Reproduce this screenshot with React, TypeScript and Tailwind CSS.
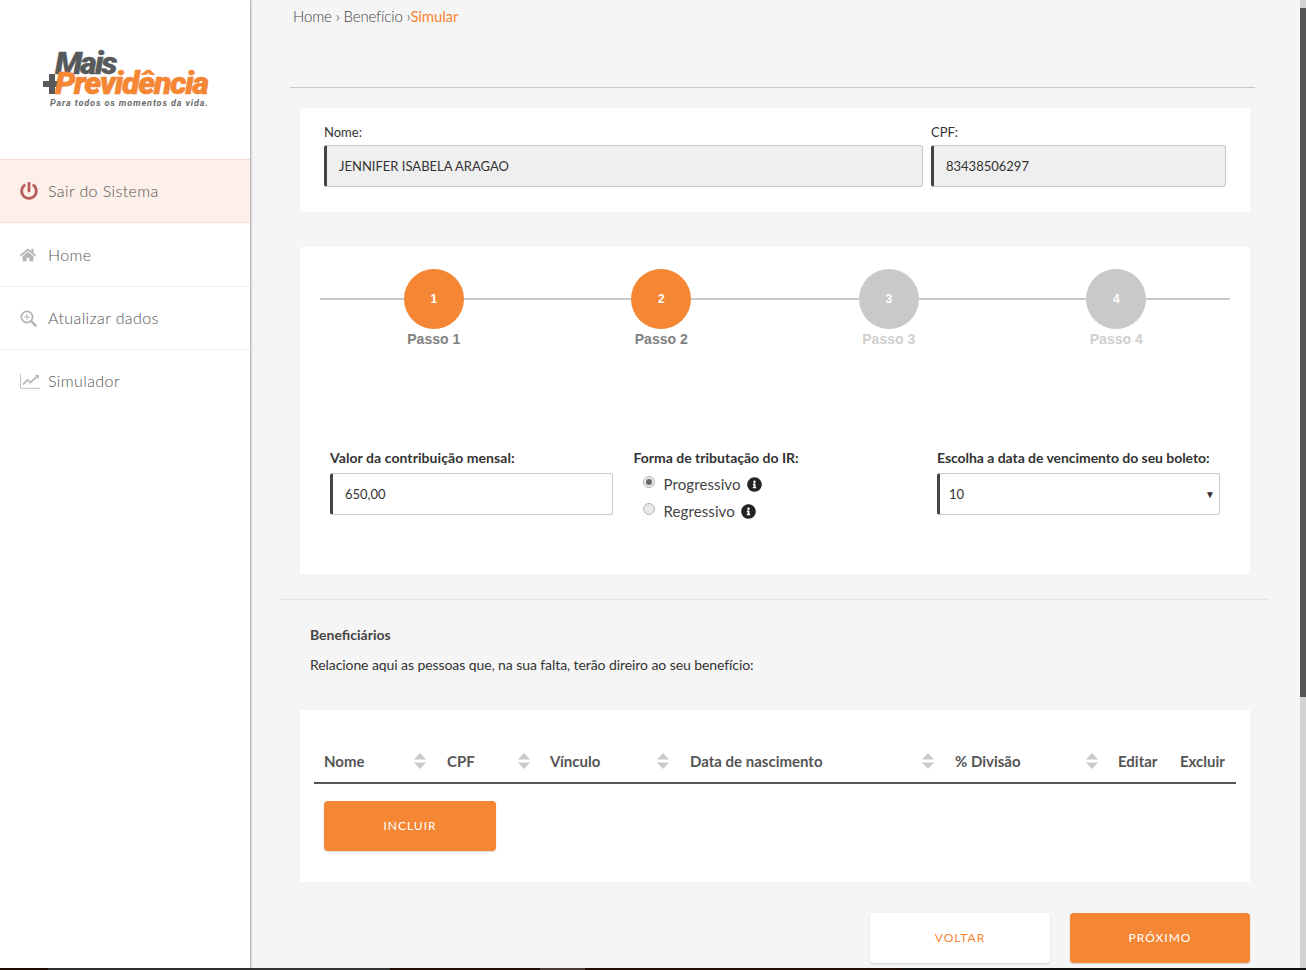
import React from "react";
import { FaHome, FaInfoCircle, FaPowerOff } from "react-icons/fa";

const lato = "font-['Lato','Noto_Sans',sans-serif]";

function SearchPlus() {
  return (
    <svg width="17" height="17" viewBox="0 0 17 17" fill="none" stroke="#b5b5b5">
      <circle cx="7" cy="7" r="5.6" strokeWidth="1.8" />
      <path d="M4.2 7h5.6M7 4.2v5.6" strokeWidth="1.2" />
      <path d="M11.2 11.2l4.4 4.4" strokeWidth="2.4" strokeLinecap="round" />
    </svg>
  );
}

function LineChart() {
  return (
    <svg width="20" height="16" viewBox="0 0 20 16" fill="none">
      <path d="M.5 1v14.3H20" stroke="#c4c4c4" strokeWidth="1" />
      <path d="M3 11.5l4.5-4.6 3 2.6L18 2.6" stroke="#b8b8b8" strokeWidth="1.8" />
      <path d="M14.8 2h4.2v4.2z" fill="#b8b8b8" />
    </svg>
  );
}

function SortIcon() {
  return (
    <svg width="12" height="16" viewBox="0 0 12 16" fill="#c9c9c9">
      <path d="M6 0l6 6.5H0z" />
      <path d="M0 9.5h12L6 16z" />
    </svg>
  );
}

function NavItem({ icon, label, active, divider, h }: { icon: React.ReactNode; label: string; active?: boolean; divider?: boolean; h: string }) {
  return (
    <div
      className={
        h + " flex items-center pl-[20px] text-[16px] font-light tracking-[0.4px] text-[#555] " +
        (active ? "bg-[#fdefe9] border-y border-[#f6ddd3] " : "") +
        (divider ? "border-b border-[#eeeeee] " : "")
      }
    >
      <span className="w-[28px] flex items-center">{icon}</span>
      <span>{label}</span>
    </div>
  );
}

function Step({ n, on }: { n: number; on: boolean }) {
  return (
    <div className="w-1/4 flex flex-col font-['Liberation_Sans',Arial,sans-serif] font-bold">
      <div className="flex items-center">
        <div className="flex-1 h-[2px] bg-[#c9c9c9]" />
        <div className={"w-[60px] h-[60px] rounded-full flex items-center justify-center text-white text-[12px] " + (on ? "bg-[#f58634]" : "bg-[#c9c9c9]")}>{n}</div>
        <div className="flex-1 h-[2px] bg-[#c9c9c9]" />
      </div>
      <div className={"text-center text-[14px] leading-[20px] " + (on ? "text-[#808080]" : "text-[#cfcfcf]")}>Passo {n}</div>
    </div>
  );
}

function Radio({ checked, label }: { checked?: boolean; label: string }) {
  return (
    <div className="flex items-center h-[27px] pl-[9px]">
      <span className="w-[12px] h-[12px] rounded-full border border-[#b5b5b5] bg-[#e9e9e9] flex items-center justify-center mb-[6px]">
        {checked && <span className="w-[6px] h-[6px] rounded-full bg-[#666]" />}
      </span>
      <span className="ml-[9px] text-[15px] tracking-[0.1px] text-[#444]">{label}</span>
      <FaInfoCircle className="ml-[6px] text-[15px] text-[#222]" />
    </div>
  );
}

function Th({ label, w, sort, pr }: { label: string; w: string; sort?: boolean; pr?: string }) {
  return (
    <div className={w + " flex items-center justify-between pl-[10px] " + (pr || "pr-[11px]")}>
      <span>{label}</span>
      {sort && <SortIcon />}
    </div>
  );
}

export default function App() {
  return (
    <div className={lato + " w-[1306px] h-[970px] overflow-hidden flex flex-col bg-[#f5f5f5] text-[#444]"}>
      <div className="flex h-[968px]">
        <aside className="w-[250px] shrink-0 bg-white shadow-[1px_0_2px_rgba(0,0,0,0.35)] z-10">
          <div className="h-[159px] pt-[48px] pl-[43px] relative">
            <svg width="18" height="20" viewBox="0 0 18 20" className="absolute left-[43px] top-[74px]">
              <path d="M6 0h6v7h6v6h-6v7H6v-7H0V7h6z" fill="#58595b" />
            </svg>
            <div className="pl-[12px] font-['Roboto',sans-serif] font-black italic text-[#58595b] text-[32px] leading-[30px] tracking-[-1.9px] [-webkit-text-stroke:0.4px_#58595b]">Mais</div>
            <div className="relative pl-[12px] -mt-[8px] font-['Roboto',sans-serif] font-black italic text-[#f58634] text-[32px] leading-[26px] tracking-[-1.2px] whitespace-nowrap [-webkit-text-stroke:0.6px_#f58634]">Previdência</div>
            <div className="pl-[7px] mt-[1px] font-['Roboto',sans-serif] font-bold italic text-[#6b6b6b] text-[9px] leading-[12px] tracking-[0.9px] whitespace-nowrap">Para todos os momentos da vida.</div>
          </div>
          <NavItem h="h-[64px]" active icon={<FaPowerOff className="text-[18px] text-[#b85c5c]" />} label="Sair do Sistema" />
          <NavItem h="h-[64px]" divider icon={<FaHome className="text-[16px] text-[#b5b5b5]" />} label="Home" />
          <NavItem h="h-[63px]" divider icon={<SearchPlus />} label="Atualizar dados" />
          <NavItem h="h-[62px]" icon={<LineChart />} label="Simulador" />
        </aside>

        <main className="flex-1 pl-[40px] pr-[45px]">
          <div className="h-[88px] pl-[3px] pt-[5px] text-[15px] leading-[22px] font-light tracking-[-0.15px] text-[#444] border-b border-[#c9c9c9] whitespace-nowrap">
            Home › Benefício ›<span className="text-[#f58634] font-normal">Simular</span>
          </div>

          <section className="ml-[10px] mr-[5px] mt-[20px] h-[104px] bg-white px-[24px] pt-[15px] flex gap-[8px] text-[13px]">
            <div className="w-[599px]">
              <div className="h-[22px] leading-[18px] text-[#333]">Nome:</div>
              <div className="h-[42px] rounded-[3px] bg-[#efefef] border border-[#c9c9c9] border-l-[3px] border-l-[#444] pl-[12px] pt-[1px] flex items-center text-[#333]">JENNIFER ISABELA ARAGAO</div>
            </div>
            <div className="w-[295px]">
              <div className="h-[22px] leading-[18px] text-[#333]">CPF:</div>
              <div className="h-[42px] rounded-[3px] bg-[#efefef] border border-[#c9c9c9] border-l-[3px] border-l-[#444] pl-[12px] pt-[1px] flex items-center text-[#333]">83438506297</div>
            </div>
          </section>

          <section className="ml-[10px] mr-[5px] mt-[35px] h-[327px] bg-white px-[20px] pt-[22px]">
            <div className="flex">
              <Step n={1} on />
              <Step n={2} on />
              <Step n={3} on={false} />
              <Step n={4} on={false} />
            </div>
            <div className="grid grid-cols-[303.5px_303.5px_283px] px-[10px] mt-[99px] text-[14px] text-[#333]">
              <div className="pr-[21px]">
                <div className="font-bold h-[25px] leading-[20px] tracking-[0.07px]">Valor da contribuição mensal:</div>
                <div className="h-[42px] rounded-[3px] bg-white border border-[#c9c9c9] border-l-[3px] border-l-[#444] pl-[12px] pt-[1px] flex items-center text-[13px]">650,00</div>
              </div>
              <div>
                <div className="font-bold h-[23px] leading-[20px]">Forma de tributação do IR:</div>
                <Radio checked label="Progressivo" />
                <Radio label="Regressivo" />
              </div>
              <div>
                <div className="font-bold h-[25px] leading-[20px] tracking-[-0.05px] whitespace-nowrap">Escolha a data de vencimento do seu boleto:</div>
                <div className="h-[42px] rounded-[3px] bg-white border border-[#c9c9c9] border-l-[3px] border-l-[#444] pl-[9px] pr-[4px] pt-[1px] flex items-center justify-between text-[13px]">
                  <span>10</span>
                  <span className="text-[10px] text-[#333]">▼</span>
                </div>
              </div>
            </div>
          </section>

          <div className="-ml-[10px] -mr-[14px] mt-[25px] h-px bg-[#e4e4e4]" />

          <div className="ml-[20px] mt-[25px] text-[14px] text-[#333]">
            <div className="font-bold h-[20px] leading-[20px] text-[#444]">Beneficiários</div>
            <div className="mt-[10px] h-[20px] leading-[20px] tracking-[-0.08px]">Relacione aqui as pessoas que, na sua falta, terão direiro ao seu benefício:</div>
          </div>

          <section className="ml-[10px] mr-[5px] mt-[35px] h-[172px] bg-white px-[14px] pt-[40px]">
            <div className="flex h-[34px] items-start leading-[22px] text-[15px] font-bold text-[#555] border-b-2 border-[#555] whitespace-nowrap">
              <Th label="Nome" w="w-[123px]" sort />
              <Th label="CPF" w="w-[103px]" sort pr="pr-[10px]" />
              <Th label="Vínculo" w="w-[140px]" sort />
              <Th label="Data de nascimento" w="w-[265px]" sort />
              <Th label="% Divisão" w="w-[163px]" sort pr="pr-[10px]" />
              <Th label="Editar" w="w-[62px]" />
              <Th label="Excluir" w="w-[66px]" />
            </div>
            <button className="mt-[17px] ml-[10px] w-[172px] h-[50px] rounded-[4px] bg-[#f58634] text-white text-[12px] tracking-[1px] shadow-[0_1px_2px_rgba(0,0,0,0.15)]">INCLUIR</button>
          </section>

          <div className="mr-[5px] mt-[31px] flex justify-end gap-[20px] text-[12px] tracking-[1px]">
            <button className="w-[180px] h-[50px] rounded-[4px] bg-white text-[#f58634] shadow-[0_1px_2px_rgba(0,0,0,0.15)]">VOLTAR</button>
            <button className="w-[180px] h-[50px] rounded-[4px] bg-[#f58634] text-white shadow-[0_1px_2px_rgba(0,0,0,0.15)]">PRÓXIMO</button>
          </div>
        </main>

        <div className="w-[6px] shrink-0 bg-[#d2d2d2] flex flex-col">
          <div className="h-[8px]" />
          <div className="h-[689px] bg-[#555]" />
        </div>
      </div>
      <div className="h-[2px] flex bg-[#111]">
        <div className="w-[48px] bg-[#200d05]" />
        <div className="w-[342px] bg-[#333]" />
        <div className="w-[150px] bg-[#200d05]" />
        <div className="w-[45px] bg-[#4a3a35]" />
        <div className="w-[317px] bg-[#200d05]" />
      </div>
    </div>
  );
}
